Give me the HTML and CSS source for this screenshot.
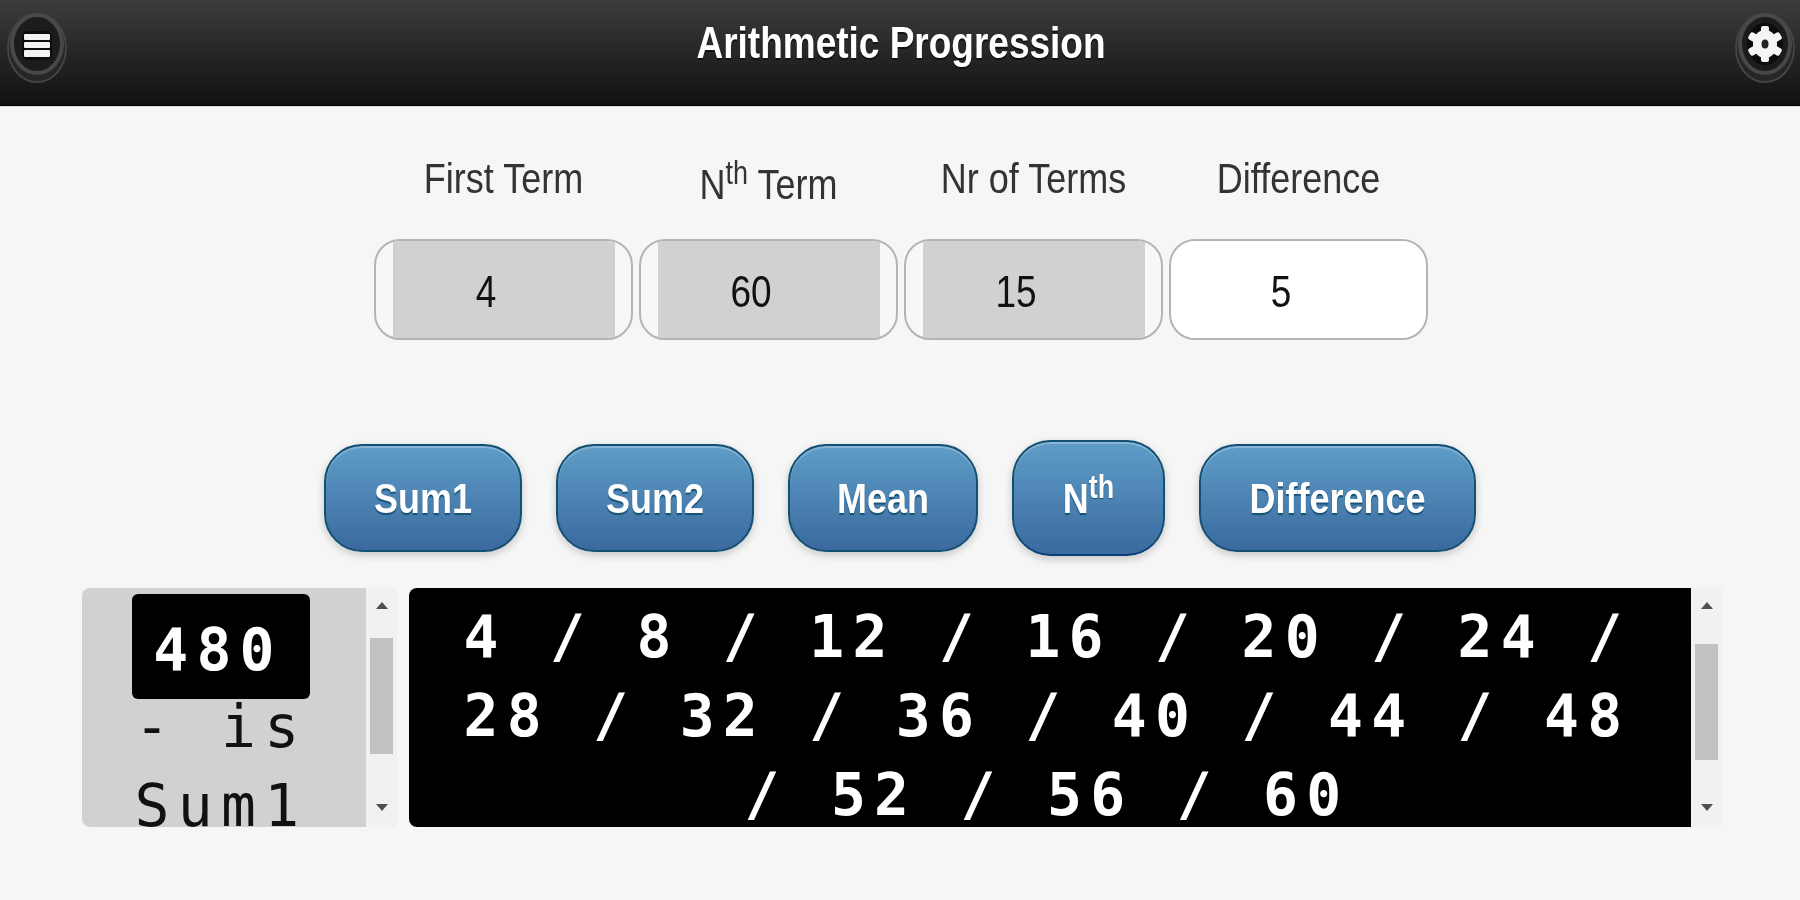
FILE: index.html
```html
<!DOCTYPE html>
<html lang="en">
<head>
<meta charset="UTF-8" />
<title>Arithmetic Progression</title>
<link rel="stylesheet" href="styles.css">
</head>
<body>
<header class="header">
  <svg class="round-icon" viewBox="0 0 60 72" aria-label="Menu">
    <ellipse class="ring-outer" cx="30" cy="37" rx="29" ry="34"/>
    <ellipse class="ring-inner" cx="30" cy="33" rx="25" ry="29"/>
    <rect x="15" y="20" width="30" height="29" rx="6" fill="#0c0c0c"/>
    <rect x="17" y="23" width="26" height="6" rx="1" fill="#f2f2f2"/>
    <rect x="17" y="31" width="26" height="6" rx="1" fill="#f2f2f2"/>
    <rect x="17" y="39" width="26" height="7" rx="1" fill="#f2f2f2"/>
  </svg>
  <h1 class="title"><span class="tall">Arithmetic Progression</span></h1>
  <svg class="round-icon" viewBox="0 0 60 72" aria-label="Settings">
    <ellipse class="ring-outer" cx="30" cy="37" rx="29" ry="34"/>
    <ellipse class="ring-inner" cx="30" cy="33" rx="25" ry="29"/>
    <ellipse cx="30" cy="33" rx="18" ry="21" fill="#0c0c0c"/>
    <g fill="#f5f5f5">
      <ellipse cx="30" cy="33" rx="12" ry="14"/>
      <rect x="26" y="15" width="8" height="36" rx="2"/>
      <rect x="26" y="15" width="8" height="36" rx="2" transform="rotate(60 30 33)"/>
      <rect x="26" y="15" width="8" height="36" rx="2" transform="rotate(-60 30 33)"/>
    </g>
    <ellipse cx="30" cy="33" rx="3.5" ry="4.5" fill="#222"/>
  </svg>
</header>

<main>
  <div class="fields">
    <label class="field-label"><span class="tall">First Term</span></label>
    <label class="field-label field-label-sup"><span class="tall">N<sup>th</sup> Term</span></label>
    <label class="field-label"><span class="tall">Nr of Terms</span></label>
    <label class="field-label"><span class="tall">Difference</span></label>
    <div class="field locked"><div class="value"><span class="tall">4</span></div></div>
    <div class="field locked"><div class="value"><span class="tall">60</span></div></div>
    <div class="field locked"><div class="value"><span class="tall">15</span></div></div>
    <div class="field"><div class="value"><span class="tall">5</span></div></div>
  </div>

  <div class="actions">
    <button class="btn btn-sum"><span class="tall">Sum1</span></button>
    <button class="btn btn-sum"><span class="tall">Sum2</span></button>
    <button class="btn btn-mean"><span class="tall">Mean</span></button>
    <button class="btn btn-nth"><span class="tall">N<sup>th</sup></span></button>
    <button class="btn btn-diff"><span class="tall">Difference</span></button>
  </div>

  <div class="results">
    <div class="pane pane-answer">
      <div class="pane-text answer-text">
        <div class="answer-box">480</div>
        - is Sum1
      </div>
      <div class="scrollbar">
        <span class="arrow-up"></span>
        <span class="thumb thumb-answer"></span>
        <span class="arrow-down"></span>
      </div>
    </div>
    <div class="pane pane-series">
      <div class="pane-text series-text">4 / 8 / 12 / 16 / 20 / 24 / 28 / 32 / 36 / 40 / 44 / 48 / 52 / 56 / 60</div>
      <div class="scrollbar">
        <span class="arrow-up"></span>
        <span class="thumb thumb-series"></span>
        <span class="arrow-down"></span>
      </div>
    </div>
  </div>
</main>
</body>
</html>
```

FILE: styles.css
```css
html, body {
  margin: 0;
  height: 100%;
  overflow: hidden;
}
body {
  background: #f6f6f6;
  font-family: 'Liberation Sans', Arial, sans-serif;
  color: #222;
}
/* the whole screen is a bit stretched upward */
.tall {
  display: inline-block;
  transform: scaleY(1.2);
}
sup {
  font-size: 0.75em;
  line-height: 0;
}

.header {
  height: 105px;
  border-bottom: 1px solid #000;
  box-shadow: 0 1px 0 #ddd;
  padding: 0 5px 0 7px;
  background: linear-gradient(#3c3c3c, #111);
  display: flex;
  align-items: center;
  justify-content: space-between;
}
.round-icon {
  width: 60px;
  height: 72px;
  margin-top: -12px;
  filter: blur(0.7px);
}
.ring-outer {
  fill: #262626;
  stroke: #444;
  stroke-width: 2;
}
.ring-inner {
  fill: #1c1c1c;
  stroke: #484848;
  stroke-width: 4;
}
.title {
  margin: -18px 0 0;
  font-size: 37px;
  font-weight: 700;
  color: #fff;
  text-shadow: 0 1px 0 #111;
}

.fields {
  width: 1054px;
  margin: 45px auto 0 374px;
  display: grid;
  grid-template-columns: repeat(4, 259px);
  column-gap: 6px;
}
.field-label {
  height: 88px;
  text-align: center;
  font-size: 36px;
  line-height: 56px;
  color: #333;
}
.field-label-sup {
  padding-top: 6px;
  height: 82px;
}
.field {
  height: 101px;
  box-sizing: border-box;
  border: 2px solid #b4b4b4;
  border-radius: 26px;
  padding: 0 16px 0 17px;
  background: #f7f7f7;
  overflow: hidden;
}
.field:not(.locked) {
  background: #fff;
}
.value {
  height: 100%;
  padding-right: 36px;
  font-size: 37px;
  line-height: 101px;
  text-align: center;
  color: #111;
  background: #fff;
}
.locked .value {
  background: #d1d1d1;
}

.actions {
  margin-top: 100px;
  height: 116px;
  display: flex;
  justify-content: center;
  align-items: center;
  gap: 34px;
}
.btn {
  height: 108px;
  box-sizing: border-box;
  border: 2px solid #145072;
  border-radius: 38px;
  padding: 2px 0 0;
  background: linear-gradient(#5f9dc8, #3a6a9e);
  box-shadow: inset 0 2px 0 rgba(255,255,255,0.25), 0 3px 8px rgba(0,0,0,0.2);
  color: #fff;
  font-family: inherit;
  font-size: 36px;
  font-weight: 700;
  text-shadow: 0 1px 1px #145072;
}
.btn-sum { width: 198px; }
.btn-mean { width: 190px; }
.btn-nth {
  width: 153px;
  height: 116px;
  border-bottom-color: #0a3f78;
}
.btn-diff { width: 277px; }

.results {
  margin: 32px 0 0 82px;
  display: flex;
  gap: 12px;
}
.pane {
  height: 239px;
  display: flex;
  overflow: hidden;
  border-radius: 8px 0 0 8px;
}
.pane-answer { width: 315px; }
.pane-series { width: 1313px; }
.pane-text {
  flex: 1;
  min-width: 0;
  text-align: center;
  font-family: 'DejaVu Sans Mono', monospace;
  font-size: 58px;
  letter-spacing: 8.3px;
  line-height: 79px;
}
.answer-text {
  background: #d1d1d1;
  color: #111;
  padding: 6px 6px 0 0;
}
.answer-box {
  width: 178px;
  height: 105px;
  margin: 0 auto -11px;
  box-sizing: border-box;
  padding: 17px 6px 0 0;
  border-radius: 6px;
  background: #000;
  color: #fff;
  font-weight: 700;
}
.series-text {
  background: #000;
  color: #fff;
  font-weight: 700;
  padding: 10px 24px 0 18px;
}
.scrollbar {
  width: 31px;
  background: #f1f1f1;
  display: flex;
  flex-direction: column;
  align-items: center;
}
.thumb {
  width: 23px;
  height: 116px;
  background: #c1c1c1;
}
.thumb-answer { margin-top: 29px; }
.thumb-series { margin-top: 35px; }
.arrow-up {
  margin-top: 14px;
  border: 6px solid transparent;
  border-top: 0;
  border-bottom: 7px solid #505050;
}
.arrow-down {
  margin-top: auto;
  margin-bottom: 16px;
  border: 6px solid transparent;
  border-bottom: 0;
  border-top: 7px solid #505050;
}
```
